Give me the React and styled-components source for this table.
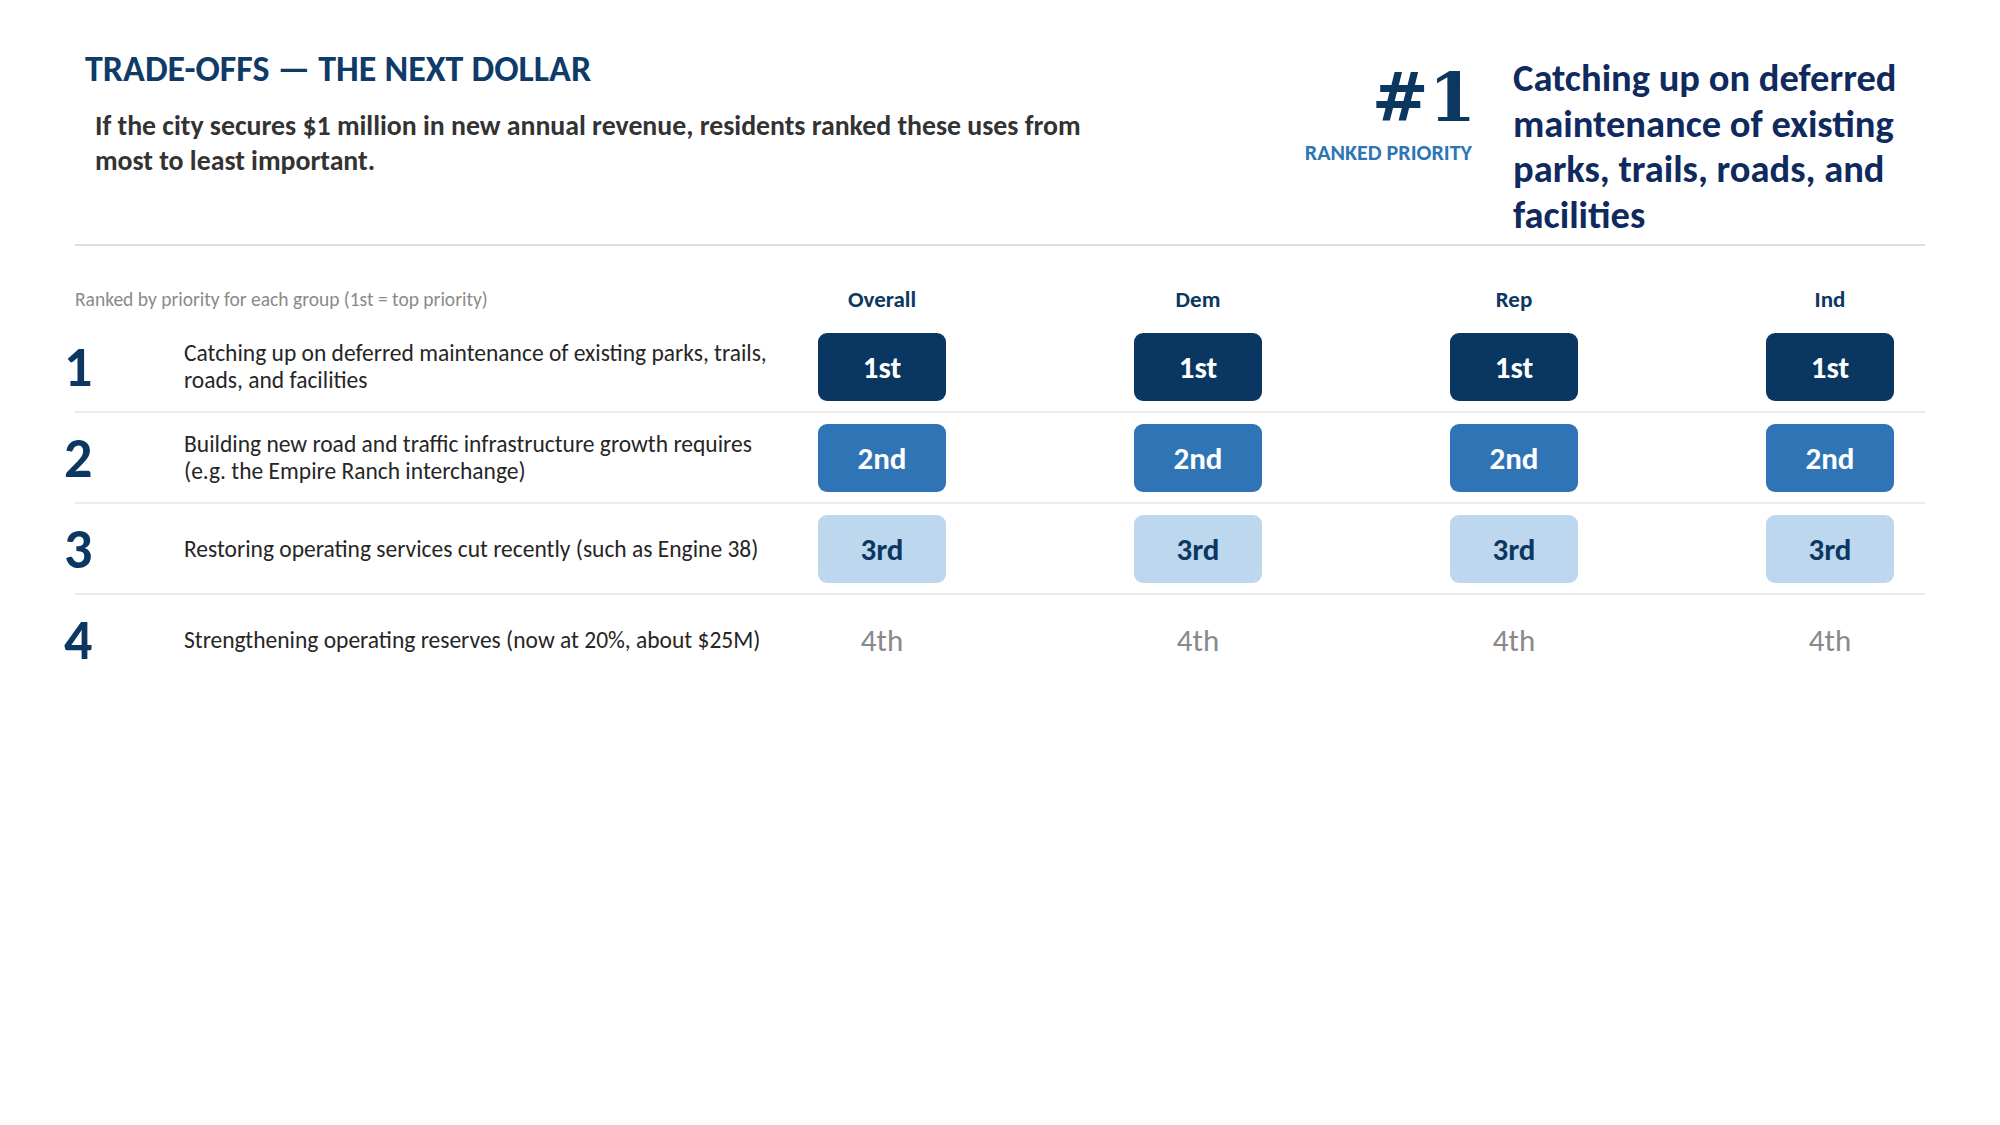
import React from "react";
import styled, { createGlobalStyle } from "styled-components";

const GlobalStyle = createGlobalStyle`
  html, body { margin: 0; padding: 0; background: #ffffff; }
  body { font-family: Carlito, Calibri, Lato, "Liberation Sans", sans-serif; }
  * { box-sizing: border-box; }
`;

const Page = styled.div`
  width: 2000px;
  min-height: 1125px;
  background: #fff;
  padding: 48px 75px 0 75px;
`;

const Header = styled.header`
  display: flex;
  justify-content: space-between;
  align-items: flex-start;
  padding-bottom: 7px;
  border-bottom: 2px solid #dcdcdc;
`;

const Intro = styled.div`
  padding-left: 10px;
`;

const Title = styled.h1`
  margin: 0;
  font-size: 36px;
  line-height: 42px;
  font-weight: 700;
  color: #0e3b68;
`;

const Subtitle = styled.p`
  margin: 19px 0 0 10px;
  width: 1015px;
  font-size: 27.8px;
  line-height: 34.5px;
  font-weight: 700;
  color: #333333;
`;

const Feature = styled.div`
  display: flex;
  align-items: flex-start;
  gap: 41px;
  margin-top: 7px;
`;

const RankBlock = styled.div`
  display: flex;
  flex-direction: column;
  align-items: flex-end;
  padding-top: 8px;
`;

const BigRank = styled.div`
  font-family: "DejaVu Serif", "Liberation Serif", serif;
  font-weight: 700;
  font-size: 68px;
  line-height: 1;
  color: #0b3761;
  margin-right: -4px;
`;

const RankLabel = styled.div`
  margin-top: 10px;
  font-size: 22px;
  line-height: 24px;
  font-weight: 700;
  color: #2e75b6;
`;

const FeatureText = styled.div`
  width: 412px;
  font-size: 38.5px;
  line-height: 45.5px;
  font-weight: 700;
  color: #0f2a5e;
`;

const TableHead = styled.div`
  display: flex;
  align-items: center;
  height: 46px;
  margin-top: 30px;
`;

const Caption = styled.div`
  flex: 1;
  font-size: 19.5px;
  color: #8a8a8a;
`;

const Cols = styled.div`
  display: grid;
  grid-template-columns: repeat(4, 190px);
  column-gap: 126px;
  justify-items: center;
  align-items: center;
`;

const ColLabel = styled.div`
  font-size: 23px;
  font-weight: 700;
  color: #0b3761;
`;

const Row = styled.div`
  display: flex;
  align-items: center;
  padding: 11px 0 10px;
  border-bottom: ${(p) => (p.$last ? "none" : "2px solid #ececec")};
`;

const Num = styled.div`
  flex: 0 0 109px;
  margin-left: -11px;
  font-size: 56px;
  line-height: 1;
  font-weight: 700;
  color: #0b3761;
`;

const Desc = styled.div`
  flex: 1;
  margin-left: 11px;
  font-size: 23.5px;
  line-height: 27px;
  color: #262626;
`;

const badgeStyles = {
  1: { bg: "#0a3761", fg: "#ffffff" },
  2: { bg: "#2f75b5", fg: "#ffffff" },
  3: { bg: "#bdd7ee", fg: "#0b3761" },
  4: { bg: "transparent", fg: "#8a8a8a" },
};

const Badge = styled.div`
  width: 128px;
  height: 68px;
  border-radius: 9px;
  display: flex;
  align-items: center;
  justify-content: center;
  font-size: 31px;
  font-weight: ${(p) => (p.$rank === 4 ? 400 : 700)};
  background: ${(p) => badgeStyles[p.$rank].bg};
  color: ${(p) => badgeStyles[p.$rank].fg};
`;

const groups = ["Overall", "Dem", "Rep", "Ind"];
const ordinals = { 1: "1st", 2: "2nd", 3: "3rd", 4: "4th" };

const items = [
  { n: 1, text: "Catching up on deferred maintenance of existing parks, trails, roads, and facilities" },
  { n: 2, text: "Building new road and traffic infrastructure growth requires (e.g. the Empire Ranch interchange)" },
  { n: 3, text: "Restoring operating services cut recently (such as Engine 38)" },
  { n: 4, text: "Strengthening operating reserves (now at 20%, about $25M)" },
];

export default function App() {
  return (
    <>
      <GlobalStyle />
      <Page>
        <Header>
          <Intro>
            <Title>TRADE-OFFS — THE NEXT DOLLAR</Title>
            <Subtitle>
              If the city secures $1 million in new annual revenue, residents ranked these uses from most to least important.
            </Subtitle>
          </Intro>
          <Feature>
            <RankBlock>
              <BigRank>#1</BigRank>
              <RankLabel>RANKED PRIORITY</RankLabel>
            </RankBlock>
            <FeatureText>
              Catching up on deferred maintenance of existing parks, trails, roads, and facilities
            </FeatureText>
          </Feature>
        </Header>

        <TableHead>
          <Caption>Ranked by priority for each group (1st = top priority)</Caption>
          <Cols>
            {groups.map((g) => (
              <ColLabel key={g}>{g}</ColLabel>
            ))}
          </Cols>
        </TableHead>

        {items.map((it, i) => (
          <Row key={it.n} $last={i === items.length - 1}>
            <Num>{it.n}</Num>
            <Desc>{it.text}</Desc>
            <Cols>
              {groups.map((g) => (
                <Badge key={g} $rank={it.n}>
                  {ordinals[it.n]}
                </Badge>
              ))}
            </Cols>
          </Row>
        ))}
      </Page>
    </>
  );
}
